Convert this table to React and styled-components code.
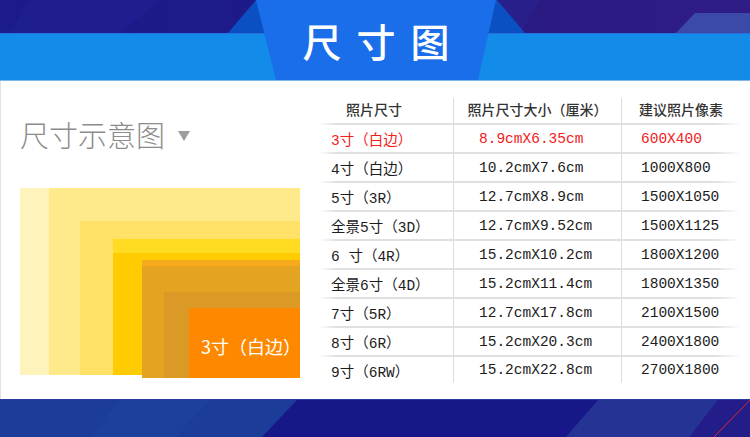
import React from 'react'
import styled, { createGlobalStyle } from 'styled-components'

const GlobalStyle = createGlobalStyle`
  html, body {
    margin: 0;
    padding: 0;
    background: #fff;
  }
  body {
    font-family: "Noto Sans CJK SC", "Noto Sans", sans-serif;
  }
  * {
    box-sizing: border-box;
  }
`

const rows = [
  { name: '3寸（白边）', size: '8.9cmX6.35cm', px: '600X400', hot: true },
  { name: '4寸（白边）', size: '10.2cmX7.6cm', px: '1000X800' },
  { name: '5寸（3R）', size: '12.7cmX8.9cm', px: '1500X1050' },
  { name: '全景5寸（3D）', size: '12.7cmX9.52cm', px: '1500X1125' },
  { name: '6 寸（4R）', size: '15.2cmX10.2cm', px: '1800X1200' },
  { name: '全景6寸（4D）', size: '15.2cmX11.4cm', px: '1800X1350' },
  { name: '7寸（5R）', size: '12.7cmX17.8cm', px: '2100X1500' },
  { name: '8寸（6R）', size: '15.2cmX20.3cm', px: '2400X1800' },
  { name: '9寸（6RW）', size: '15.2cmX22.8cm', px: '2700X1800' },
]

// nested print sizes, relative to the diagram box
const boxes = [
  { l: 0, t: 0, b: 3, c: '#fef4bb' },
  { l: 29, t: 0, b: 3, c: '#feea8b' },
  { l: 60, t: 33, b: 3, c: '#fee166' },
  { l: 93, t: 51, b: 3, c: '#ffdc22' },
  { l: 93, t: 65, b: 3, c: '#fecc00' },
  { l: 122, t: 72, b: 0, c: '#f8aa1f' },
  { l: 122, t: 78, b: 0, c: '#e4a421' },
  { l: 144, t: 104, b: 0, c: '#db9a25' },
  { l: 169, t: 120, b: 0, c: '#fe8900' },
]

const Page = styled.div`
  width: 750px;
  height: 437px;
  display: flex;
  flex-direction: column;
  overflow: hidden;
  background: #fff;
`

const Header = styled.header`
  position: relative;
  height: 81px;
  display: flex;
  flex-direction: column;
  flex: none;
`

const TopBand = styled.div`
  position: relative;
  height: 33px;
  background: linear-gradient(90deg, #1c1b8b 0%, #1e1a88 45%, #2b1b82 75%, #2f1d85 100%);
  overflow: hidden;
`

const BlueBand = styled.div`
  height: 48px;
  background: #138be8;
  border-top: 1px solid #2a6ee0;
  border-bottom: 1px solid #7fb6ea;
`

const Shoulder = styled.div`
  position: absolute;
  left: 228px;
  top: 0;
  width: 297px;
  height: 33px;
  background: #0b50c2;
  clip-path: polygon(0 100%, 28px 0, 269px 0, 297px 100%);
`

const Tab = styled.div`
  position: absolute;
  left: 256px;
  top: 0;
  width: 240px;
  height: 80px;
  background: #1a6ee9;
  clip-path: polygon(0 0, 240px 0, 222px 80px, 20px 80px);
  display: flex;
  align-items: center;
  justify-content: center;
`

const Title = styled.h1`
  margin: 0;
  padding-left: 15px;
  color: #fff;
  font-size: 39px;
  font-weight: 500;
  letter-spacing: 15px;
  line-height: 1;
`

const Main = styled.main`
  flex: 1;
  display: flex;
  border-left: 1px solid #e2e2e2;
`

const Legend = styled.section`
  width: 300px;
  padding-left: 19px;
  display: flex;
  flex-direction: column;
  flex: none;
`

const LegendTitle = styled.h2`
  margin: 37px 0 0;
  height: 32px;
  display: flex;
  align-items: center;
  gap: 13px;
  color: #8c8c8c;
  font-size: 29px;
  font-weight: 300;
  line-height: 1;
`

const Caret = styled.span`
  width: 0;
  height: 0;
  border-left: 6px solid transparent;
  border-right: 6px solid transparent;
  border-top: 10px solid #9c9c9c;
  margin-top: 4px;
`

const Diagram = styled.div`
  position: relative;
  margin-top: 38px;
  width: 280px;
  height: 190px;
`

const Box = styled.div`
  position: absolute;
  right: 0;
  left: ${p => p.$l}px;
  top: ${p => p.$t}px;
  bottom: ${p => p.$b}px;
  background: ${p => p.$c};
`

const BoxLabel = styled.span`
  position: absolute;
  left: 12px;
  top: 25px;
  color: #fff;
  font-size: 18px;
  white-space: nowrap;
`

const Table = styled.section`
  margin: 17px 0 0 19px;
  width: 420px;
  display: flex;
  flex-direction: column;
`

const Row = styled.div`
  display: grid;
  grid-template-columns: 133px 168px 119px;
  height: ${p => (p.$head ? 27 : p.$last ? 26 : 29)}px;
  border-bottom: ${p => (p.$last ? 'none' : '2px solid #e2e2e2')};
  border-image: ${p =>
    p.$last ? 'none' : 'linear-gradient(90deg, rgba(226,226,226,0), #e0e0e0 4%, #e0e0e0 94%, rgba(226,226,226,0)) 1'};
  color: ${p => (p.$hot ? '#f2201b' : '#1c1c1c')};
`

const Cell = styled.div`
  display: flex;
  align-items: center;
  justify-content: ${p => (p.$center ? 'center' : 'flex-start')};
  padding-left: ${p => p.$pad || 0}px;
  border-left: ${p => (p.$line ? '1px solid #dcdcdc' : 'none')};
  font-family: "Liberation Mono", "Noto Sans CJK SC", monospace;
  font-size: 14.5px;
  white-space: nowrap;
`

const HeadCell = styled(Cell)`
  font-family: "Noto Sans CJK SC", sans-serif;
  font-size: 14px;
  font-weight: 500;
  color: #333;
  padding-bottom: 3px;
`

const Footer = styled.footer`
  position: relative;
  height: 38px;
  flex: none;
  border-top: 1px solid #2a3aa0;
  background: #17178a;
  overflow: hidden;
`

const Backdrop = styled.svg`
  position: absolute;
  left: 0;
  top: 0;
`

function App() {
  return (
    <Page>
      <GlobalStyle />
      <Header>
        <TopBand>
          <Backdrop width="750" height="33">
            <polygon points="30,0 160,0 120,33 10,33" fill="#24249a" opacity="0.35" />
            <polygon points="470,0 540,0 520,33 440,33" fill="#2a2ca0" opacity="0.3" />
            <polygon points="695,13 750,13 750,33 676,33" fill="#3a4aa6" />
          </Backdrop>
        </TopBand>
        <BlueBand />
        <Shoulder />
        <Tab>
          <Title>尺寸图</Title>
        </Tab>
      </Header>

      <Main>
        <Legend>
          <LegendTitle>
            尺寸示意图
            <Caret />
          </LegendTitle>
          <Diagram>
            {boxes.map((b, i) => (
              <Box key={i} $l={b.l} $t={b.t} $b={b.b} $c={b.c}>
                {i === boxes.length - 1 && <BoxLabel>3寸（白边）</BoxLabel>}
              </Box>
            ))}
          </Diagram>
        </Legend>

        <Table>
          <Row $head>
            <HeadCell $pad={26}>照片尺寸</HeadCell>
            <HeadCell $center $line>照片尺寸大小（厘米）</HeadCell>
            <HeadCell $center $line>建议照片像素</HeadCell>
          </Row>
          {rows.map((r, i) => (
            <Row key={r.name} $hot={r.hot} $last={i === rows.length - 1}>
              <Cell $pad={11}>{r.name}</Cell>
              <Cell $pad={25} $line>{r.size}</Cell>
              <Cell $pad={19} $line>{r.px}</Cell>
            </Row>
          ))}
        </Table>
      </Main>

      <Footer>
        <Backdrop width="750" height="38">
          <polygon points="0,0 297,0 261,38 0,38" fill="#1b3c99" />
          <polygon points="120,0 210,0 175,38 90,38" fill="#2046a2" opacity="0.4" />
          <polygon points="598,0 718,0 689,38 565,38" fill="#243394" />
          <polygon points="718,0 750,0 750,38 689,38" fill="#231d8a" />
          <line x1="750" y1="0" x2="713" y2="38" stroke="#e0242a" strokeWidth="1" />
        </Backdrop>
      </Footer>
    </Page>
  )
}

export default App
